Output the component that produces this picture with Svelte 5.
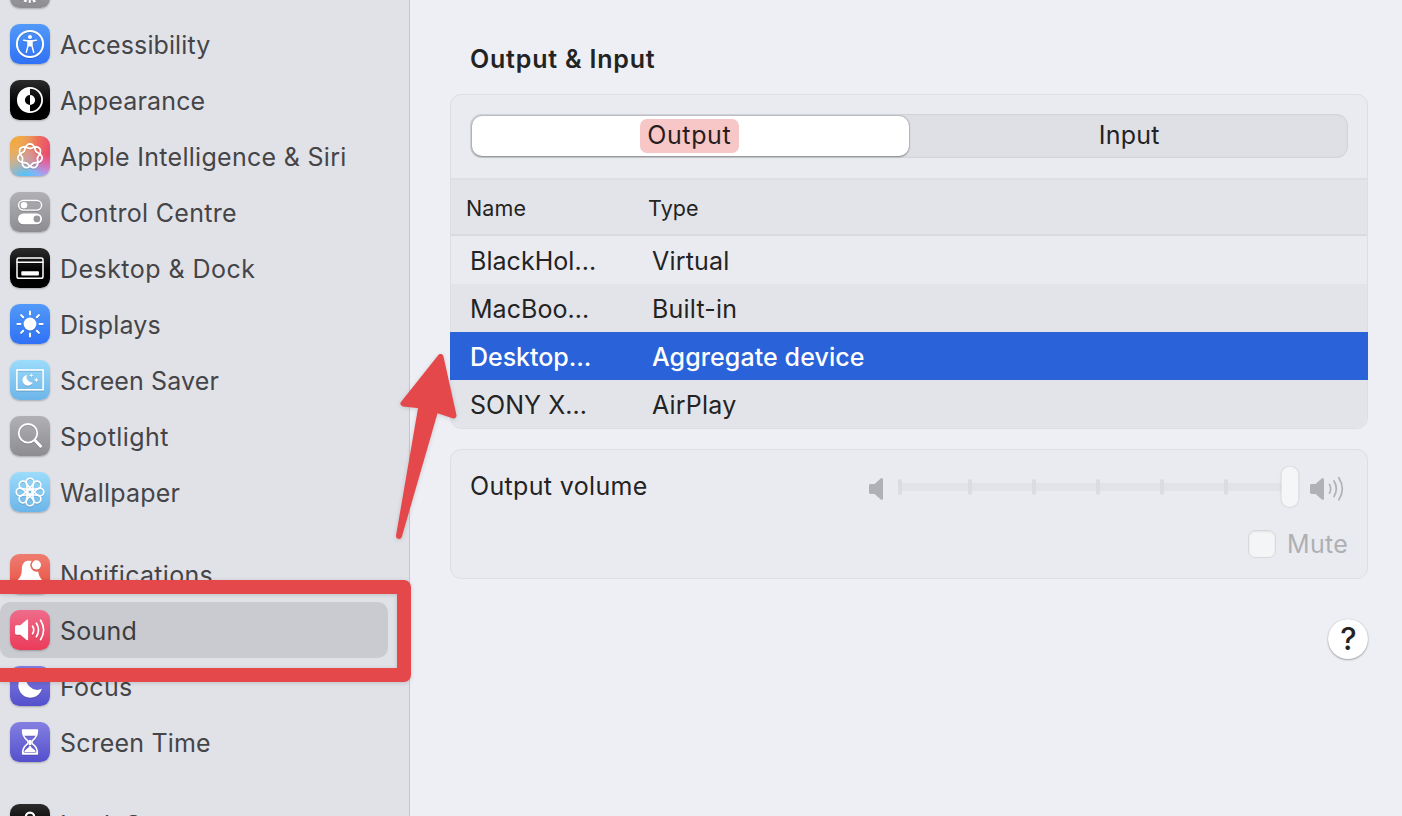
<script>
  const groups = [
    [
      { id: 'general', label: '', tone: 'grey', ls: 0 },
      { id: 'access', label: 'Accessibility', tone: 'blue', ls: 0.1 },
      { id: 'appear', label: 'Appearance', tone: 'black', ls: 0.15 },
      { id: 'siri', label: 'Apple Intelligence & Siri', tone: 'rainbow', ls: 0.29 },
      { id: 'control', label: 'Control Centre', tone: 'grey', ls: 0.31 },
      { id: 'dock', label: 'Desktop & Dock', tone: 'black', ls: 0.46 },
      { id: 'displays', label: 'Displays', tone: 'blue', ls: 0.15 },
      { id: 'saver', label: 'Screen Saver', tone: 'sky', ls: 0.12 },
      { id: 'spotlight', label: 'Spotlight', tone: 'grey', ls: 0.45 },
      { id: 'wallpaper', label: 'Wallpaper', tone: 'sky', ls: 0.2 }
    ],
    [
      { id: 'notif', label: 'Notifications', tone: 'red', ls: 0.3 },
      { id: 'sound', label: 'Sound', tone: 'pink', ls: 0.25, selected: true },
      { id: 'focus', label: 'Focus', tone: 'indigo', ls: 0.3 },
      { id: 'time', label: 'Screen Time', tone: 'indigo', ls: 0.17 }
    ],
    [{ id: 'lock', label: 'Lock Screen', tone: 'black', ls: 0.2 }]
  ];
  const devices = [
    { name: 'BlackHol...', type: 'Virtual' },
    { name: 'MacBoo...', type: 'Built-in' },
    { name: 'Desktop...', type: 'Aggregate device', selected: true },
    { name: 'SONY X...', type: 'AirPlay' }
  ];
  const turns8 = [0, 45, 90, 135, 180, 225, 270, 315];

  // Seven interlaced lobes: one closed line that goes round the centre twice.
  const knot = Array.from({ length: 168 }, (_, i) => {
    const t = (i / 168) * 4 * Math.PI;
    const r = 10 + 2.3 * Math.cos(3.5 * t);
    return `${(20 + r * Math.sin(t)).toFixed(2)},${(20.2 - r * Math.cos(t)).toFixed(2)}`;
  }).join(' ');
</script>

{#snippet glyph(id)}
  <svg class="glyph" viewBox="0 0 40 40" fill="none" stroke="#fff" stroke-linecap="round" stroke-linejoin="round">
    {#if id === 'general'}
      <circle cx="20" cy="20" r="11.200" stroke-width="2.200" />
      <circle cx="20" cy="20" r="13.400" stroke-width="3" stroke-dasharray="2.500 2.177" stroke-dashoffset="1.250" stroke-linecap="butt" transform="rotate(90 20 20)" />
    {:else if id === 'access'}
      <circle cx="20" cy="20" r="13.100" stroke-width="2" />
      <circle cx="20" cy="12.900" r="2" fill="#fff" stroke="none" />
      <path d="M13.600 16.200 18 17.100h4l4.400-.9" stroke-width="1.500" />
      <path d="M18 17h4v5l1.700 6.400M18 17v5l-1.700 6.400" stroke-width="1.500" />
      <path d="M18 17h4v5.500h-4z" fill="#fff" stroke="none" />
    {:else if id === 'appear'}
      <circle cx="20" cy="20" r="12.100" stroke-width="1.800" />
      <path d="M20 7.500a12.500 12.500 0 0 0 0 25v-7.400a5.100 5.100 0 0 1 0-10.200z" fill="#fff" stroke="none" />
      <path d="M20 14.900a5.100 5.100 0 0 1 0 10.200z" fill="#fff" stroke="none" />
    {:else if id === 'siri'}
      <polygon points={knot} stroke-width="1.800" />
    {:else if id === 'control'}
      <rect x="8.600" y="8.500" width="23" height="9.600" rx="4.800" stroke-width="1.400" />
      <circle cx="14" cy="13.300" r="3.300" fill="#fff" stroke="none" />
      <rect x="8" y="21.500" width="24" height="10.800" rx="5.400" fill="#fff" stroke="none" />
      <circle cx="26.900" cy="26.900" r="3.400" fill="#97969b" stroke="none" />
    {:else if id === 'dock'}
      <rect x="7" y="9.900" width="26" height="20.300" rx="1.800" stroke-width="1.500" />
      <path d="M7 14.200h26" stroke-width="1.400" />
      <rect x="11.300" y="23.300" width="17.600" height="4.200" rx=".8" fill="#fff" stroke="none" />
    {:else if id === 'displays'}
      <circle cx="20" cy="20" r="6.400" fill="#fff" stroke="none" />
      {#each turns8 as a}
        <path d="M20 7.400v3" stroke-width="2" transform="rotate({a} 20 20)" />
      {/each}
    {:else if id === 'saver'}
      <rect x="6.900" y="10" width="26.200" height="19.800" stroke-width="1.600" stroke-linejoin="miter" />
      <path d="M17 14.900a5.400 5.400 0 1 0 5.800 7.500 5.400 5.400 0 0 1-5.800-7.500z" fill="#fff" stroke="none" />
      <path d="m21.300 13.200.6 1.700 1.700.6-1.700.6-.6 1.700-.6-1.700-1.700-.6 1.700-.6zM26.300 17.300l.7 2 2 .7-2 .7-.7 2-.7-2-2-.7 2-.7z" fill="#fff" stroke="none" />
    {:else if id === 'spotlight'}
      <circle cx="18" cy="17.300" r="9.300" stroke-width="1.800" />
      <path d="m24.900 24.300 5.700 5.900" stroke-width="2.800" />
    {:else if id === 'wallpaper'}
      {#each turns8 as a}
        <path d="M21.800 18C21 15.800 16.100 13.600 16.100 10.100a3.900 3.900 0 0 1 7.800 0C23.900 13.600 19 15.800 18.200 18" stroke-width="1.600" transform="rotate({a} 20 20)" />
      {/each}
      <circle cx="20" cy="20" r="2" stroke-width="1" />
    {:else if id === 'notif'}
      <path d="M19 6.500c-5 0-7.200 4-7.200 9 0 5-1.300 7.500-4.300 10.800h24.800c-2.300-2.500-3.700-5.300-4-8.700a6.500 6.500 0 0 1-6.600-10.300c-.8-.5-1.700-.8-2.700-.8z" fill="#fff" stroke="none" />
      <circle cx="26.400" cy="10.900" r="4.600" fill="#fff" stroke="none" />
      <path d="M16 28.500a4 4 0 0 0 8 0z" fill="#fff" stroke="none" />
    {:else if id === 'sound'}
      <path d="M6.700 15.300h3.600l6.200-5.400c.8-.6 1.600-.2 1.600.8v18.600c0 1-.8 1.400-1.600.8l-6.200-5.400H6.700c-.9 0-1.700-.7-1.700-1.700v-6c0-1 .7-1.700 1.700-1.700z" fill="#fff" stroke="none" />
      <path d="M22.600 16.200q2.300 3.800 0 7.600M26.400 13.200q4.200 6.800 0 13.600M30.600 10.300q6 9.700 0 19.400" stroke-width="1.700" />
    {:else if id === 'focus'}
      <path d="M17 8.100a12 12 0 1 0 14.900 14.700A11.300 11.300 0 0 1 17 8.100z" fill="#fff" stroke="none" />
    {:else if id === 'time'}
      <path d="M12.700 8.400h14.600c.3 5.500-1.700 7.700-4.500 9.900-1.200 1-1.200 2.800 0 3.800 2.800 2.200 4.800 4.400 4.500 9.500H12.700c-.3-5.100 1.700-7.300 4.500-9.500 1.200-1 1.200-2.800 0-3.800-2.800-2.200-4.800-4.400-4.500-9.900z" stroke-width="1.700" />
      <path d="M12 7.600h16l-1 6.200H13zM12 30h16v2.500H12zM20 23l-1.500 2.500-3.500 2.700-1 2.500h12l-1-2.500-3.500-2.700zM18.600 18h2.800v5h-2.800z" fill="#fff" stroke="none" />
    {:else}
      <path d="M15.800 18v-5.200a4.200 4.200 0 0 1 8.400 0V18" stroke-width="2.200" />
      <rect x="12" y="17" width="16" height="13" rx="2" fill="#fff" stroke="none" />
    {/if}
  </svg>
{/snippet}

<div class="window">
  <nav class="sidebar">
    {#each groups as items}
      <ul class="group">
        {#each items as item}
          <li class="item" class:selected={item.selected}>
            <span class="tile {item.tone}">{@render glyph(item.id)}</span>
            <span class="label" style="letter-spacing: {item.ls}px">{item.label}</span>
          </li>
        {/each}
      </ul>
    {/each}
  </nav>

  <main class="content">
    <h2>Output &amp; Input</h2>

    <section class="card devices">
      <div class="tabs-area">
        <div class="tabs">
          <div class="tab active"><mark>Output</mark></div>
          <div class="tab">Input</div>
        </div>
      </div>
      <div class="row head"><span>Name</span><span>Type</span></div>
      {#each devices as d}
        <div class="row" class:chosen={d.selected}><span>{d.name}</span><span class="type">{d.type}</span></div>
      {/each}
    </section>

    <section class="card volume">
      <div class="volume-line">
        <span class="volume-title">Output volume</span>
        <svg class="slider" viewBox="0 0 478 44" width="478" height="44">
          <path d="M2.600 18h4l5.800-5.300c.9-.8 2.600-.5 2.600.8v19.200c0 1.300-1.500 1.500-2.500.6L6.600 28h-4C1.600 28 1 27.300 1 26.300v-6.600C1 18.700 1.600 18 2.600 18z" fill="#b0b1b5" />
          <rect x="31" y="17" width="390" height="8" rx="4" fill="#e2e3e7" />
          {#each [30, 100, 164, 228, 292, 356] as x}
            <rect {x} y="13" width="4" height="16" rx="2" fill="#dbdce0" />
          {/each}
          <rect class="thumb" x="413.500" y="0.700" width="16.800" height="40.300" rx="8.400" fill="#f5f6f8" />
          <path d="M443.600 18h4l5.800-5.300c.9-.8 2.600-.5 2.600.8v19.200c0 1.300-1.500 1.500-2.500.6l-5.900-5.300h-4c-1 0-1.600-.7-1.600-1.700v-6.600c0-1 .6-1.700 1.600-1.700z" fill="#b0b1b5" />
          <path d="M461.500 18.400q2.400 4.400 0 8.800M466 15q4.600 7.800 0 15.600M470.800 11.700q7 11.100 0 22.200" fill="none" stroke="#b0b1b5" stroke-width="1.700" stroke-linecap="round" />
        </svg>
      </div>
      <div class="mute"><span class="box"></span><span>Mute</span></div>
    </section>

    <div class="help-line"><button class="help">?</button></div>
  </main>

  <svg class="annotation" viewBox="0 0 1402 816" width="1402" height="816">
    <path d="M-10 587H404V675H-10" fill="none" stroke="#e5484b" stroke-width="14" stroke-linejoin="round" />
    <path d="M440.500 357 403.500 403.500 421.500 405.500 399 536 435.500 409.500 453.500 415.500z" fill="#e5484b" stroke="#e5484b" stroke-width="6" stroke-linejoin="round" />
  </svg>
</div>

<style>
  :global(body) { margin: 0; overflow: hidden; }
  .window {
    position: relative;
    display: flex;
    width: 1402px;
    height: 816px;
    overflow: hidden;
    background: #eeeff5;
    color: #232324;
    font-family: Inter, sans-serif;
    font-size: 25px;
    font-weight: 420;
    letter-spacing: 0.25px;
  }
  .sidebar {
    box-sizing: border-box;
    flex: 0 0 410px;
    height: 816px;
    overflow: hidden;
    background: #e1e2e8;
    border-right: 1px solid #c6c7cb;
  }
  .group { list-style: none; margin: 0 0 26px; padding: 0; }
  .group:first-child { margin-top: -40px; }
  .item {
    display: flex;
    align-items: center;
    gap: 10px;
    box-sizing: border-box;
    width: 388px;
    height: 56px;
    padding-left: 10px;
    border-radius: 10px;
    color: #454548;
    white-space: nowrap;
  }
  .item.selected { background: #cacbd0; color: #3d3d40; }
  .label { line-height: 56px; padding-top: 2px; }
  .tile {
    flex: none;
    width: 40px;
    height: 40px;
    border-radius: 9.500px;
    box-shadow: 0 1px 2px rgba(0, 0, 0, 0.25);
  }
  .glyph { display: block; width: 40px; height: 40px; filter: drop-shadow(0 1px 0.5px rgba(0, 0, 0, 0.14)); }
  .grey { background: linear-gradient(#b1b0b5, #8d8c91); }
  .blue { background: linear-gradient(#529af8, #2f71f6); }
  .black { background: linear-gradient(#2c2c2c, #000 60%); }
  .sky { background: linear-gradient(#9cdcfb, #6cb5e9); }
  .red { background: linear-gradient(#ee7d70, #ea4b3c); }
  .pink { background: linear-gradient(#ef6c8b, #eb3b59); }
  .indigo { background: linear-gradient(#8480e2, #5450cc); }
  .rainbow {
    background:
      radial-gradient(circle at 45% 52%, rgba(205, 160, 170, 0.6), transparent 38%),
      radial-gradient(circle at 0 0, #f2a93b 10%, transparent 75%),
      radial-gradient(circle at 100% 15%, #ea4b70 25%, transparent 65%),
      radial-gradient(circle at 35% 105%, #5cc0fa 10%, transparent 62%),
      radial-gradient(circle at 100% 85%, #d890fa 20%, transparent 75%),
      #e2b4ae;
  }
  .content { flex: 1; padding: 42px 34px 0 40px; }
  h2 { margin: 0 0 18px 20px; font-size: 25px; line-height: 34px; font-weight: 620; letter-spacing: 0.8px; }
  .card {
    box-sizing: border-box;
    width: 918px;
    background: #eaebf0;
    border: 1px solid #dddee3;
    border-radius: 11px;
  }
  .devices { height: 335px; }
  .tabs-area { box-sizing: border-box; height: 83px; padding: 19px 19px 0; }
  .tabs {
    display: flex;
    box-sizing: border-box;
    height: 44px;
    border: 1px solid #d3d4d9;
    border-radius: 11px;
    background: #dfe0e5;
    box-shadow: inset 0 0 3px rgba(0, 0, 0, 0.04);
  }
  .tab { flex: 1; display: flex; align-items: center; justify-content: center; padding: 0 0 2px 2px; }
  .tab.active { margin: 1px; padding: 0 1px 0 0; background: #fff; border-radius: 10px; box-shadow: 0 0 1px 1px rgba(0, 0, 0, 0.14), 0 1px 2px rgba(0, 0, 0, 0.28); }
  mark { box-sizing: border-box; width: 99px; height: 34px; margin: -1px 1px 0 0; text-align: center; border-radius: 7px; background: #f7c7c7; color: #281d1e; line-height: 33px; letter-spacing: 0.6px; }
  .row { display: grid; grid-template-columns: 182px 1fr; box-sizing: border-box; height: 48px; padding-left: 19px; line-height: 50px; letter-spacing: 0.04px; }
  .type { letter-spacing: 0.2px; }
  .row:nth-child(even) { background: #e3e4e9; }
  .row:last-child { border-radius: 0 0 10px 10px; }
  .row.head {
    height: 58px;
    padding-left: 15px;
    border: solid #d9dadf;
    border-width: 2px 0;
    border-top-color: #dedfe3;
    background: #e3e4e9;
    font-size: 21.500px;
    line-height: 57px;
    letter-spacing: 0.1px;
  }
  .row.chosen { background: #2962d9; color: #fff; margin: 0 -1px; padding-left: 20px; font-weight: 500; letter-spacing: -0.05px; }
  .row.chosen .type { letter-spacing: 0.09px; }
  .volume { height: 130px; margin-top: 20px; padding-left: 19px; }
  .volume-line { display: flex; align-items: flex-start; }
  .volume-title { flex: 0 0 398px; line-height: 72px; letter-spacing: 0.34px; height: 72px; }
  .slider { flex: none; margin-top: 16px; }
  .thumb { filter: drop-shadow(0 0.5px 1px rgba(0, 0, 0, 0.18)); }
  .mute { display: flex; justify-content: flex-end; align-items: center; gap: 11px; margin: 8px 19px 0 0; height: 28px; color: #afb0b4; }
  .box { box-sizing: border-box; width: 28px; height: 28px; border: 1px solid #d7d8dc; border-radius: 7px; background: #f4f5f7; box-shadow: inset 0 1px 2px rgba(0, 0, 0, 0.08); }
  .help-line { display: flex; justify-content: flex-end; margin-top: 40px; }
  .help {
    width: 40px;
    height: 40px;
    padding: 0 0 0 1px;
    border: 0;
    border-radius: 50%;
    background: #fff;
    box-shadow: 0 0 1px rgba(0, 0, 0, 0.25), 0 1px 2px rgba(0, 0, 0, 0.3);
    color: #232324;
    font: 500 31px/40px Inter, sans-serif;
  }
  .annotation { position: absolute; inset: 0; pointer-events: none; filter: drop-shadow(0 1px 2px rgba(0, 0, 0, 0.15)); }
</style>
